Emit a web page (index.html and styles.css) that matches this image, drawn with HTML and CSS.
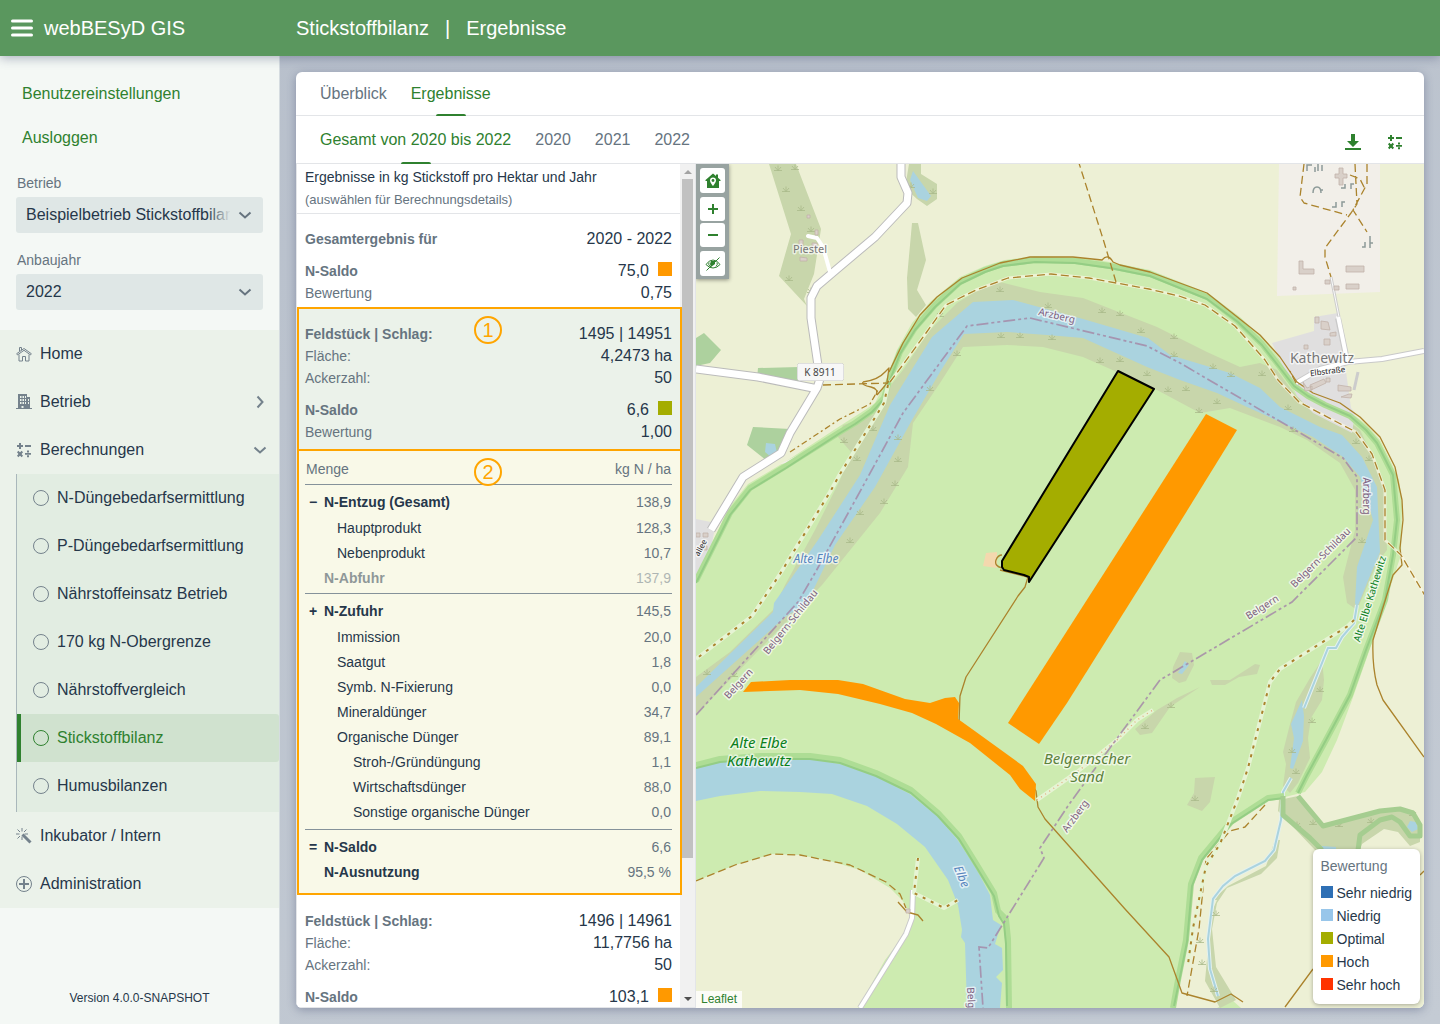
FILE: index.html
```html
<!DOCTYPE html>
<html lang="de">
<head>
<meta charset="utf-8">
<meta name="viewport" content="width=device-width, initial-scale=1">
<title>webBESyD GIS – Stickstoffbilanz</title>
<link rel="stylesheet" href="styles.css">
</head>
<body>
<svg class="sprite" aria-hidden="true">
  <symbol id="i-calc" viewBox="0 0 16 16"><path d="M3 1h2v2h2v2H5v2H3V5H1V3h2zM9 3h6v2H9zM11 8.500h2v2h-2zM9 11h6v1.700H9zM11 13.300h2v2h-2z"/><path d="M1.700 9.500l4.600 5M6.300 9.500l-4.600 5" fill="none" stroke="currentColor" stroke-width="2"/><path d="M2.500 10.500h3v3h-3z"/></symbol>
  <symbol id="i-circle" viewBox="0 0 16 16"><circle cx="8" cy="8" r="7.500" fill="none" stroke="currentColor"/></symbol>
  <symbol id="i-down" viewBox="0 0 16 16"><path d="M2.500 5.500l5.500 5 5.500-5" fill="none" stroke="currentColor" stroke-width="2"/></symbol>
  <symbol id="i-right" viewBox="0 0 16 16"><path d="M5.500 2.500l5 5.500-5 5.500" fill="none" stroke="currentColor" stroke-width="2"/></symbol>
</svg>

<header class="topbar">
  <div class="brand">
    <button class="menu-button" type="button" aria-label="Menü"><svg viewBox="0 0 22 18"><path d="M1.500 2h19M1.500 9h19M1.500 16h19" stroke="#fff" stroke-width="3" stroke-linecap="round"/></svg></button>
    <span>webBESyD GIS</span>
  </div>
  <div class="page-title"><span>Stickstoffbilanz</span><span>|</span><span>Ergebnisse</span></div>
</header>

<div class="shell">
  <aside class="sidebar">
    <div class="account">
      <a href="#einstellungen">Benutzereinstellungen</a>
      <a href="#logout">Ausloggen</a>
    </div>
    <div class="field">
      <label for="betrieb">Betrieb</label>
      <div class="select fade"><select id="betrieb"><option>Beispielbetrieb Stickstoffbilanz</option></select><svg><use href="#i-down"/></svg></div>
    </div>
    <div class="field">
      <label for="jahr">Anbaujahr</label>
      <div class="select"><select id="jahr"><option>2022</option><option>2021</option><option>2020</option></select><svg><use href="#i-down"/></svg></div>
    </div>
    <nav class="nav">
      <a class="item" href="#home"><svg viewBox="0 0 16 16" fill="none" stroke="currentColor"><path d="M.7 7.700L8 2.500l7.300 5.200-.8 1.200L8 4.300 1.500 8.900zM3 8.500v6.500h3.500v-4.500h3V15H13V8.500M3.500 5V1.500h2V4"/></svg>Home</a>
      <a class="item" href="#betrieb-menu"><svg viewBox="0 0 16 16"><path fill-rule="evenodd" d="M2 0h9v3h3v11h2v1H0v-1h2zM4 2v2h1.500V2zM6.500 2v2H8V2zM9 2v2h1V2zM4 5v2h1.500V5zM6.500 5v2H8V5zM9 5v2h1V5zM4 8v2h1.500V8zM6.500 8v2H8V8zM9 8v2h1V8zM5.500 12v2h2v-2zM12 5v2h1V5zM12 8v2h1V8z"/></svg>Betrieb<svg class="caret"><use href="#i-right"/></svg></a>
      <a class="item" href="#berechnungen"><svg><use href="#i-calc"/></svg>Berechnungen<svg class="caret"><use href="#i-down"/></svg></a>
      <div class="submenu">
        <a href="#n"><svg><use href="#i-circle"/></svg>N-Düngebedarfsermittlung</a>
        <a href="#p"><svg><use href="#i-circle"/></svg>P-Düngebedarfsermittlung</a>
        <a href="#ne"><svg><use href="#i-circle"/></svg>Nährstoffeinsatz Betrieb</a>
        <a href="#170"><svg><use href="#i-circle"/></svg>170 kg N-Obergrenze</a>
        <a href="#nv"><svg><use href="#i-circle"/></svg>Nährstoffvergleich</a>
        <a class="active" href="#sb" aria-current="page"><svg><use href="#i-circle"/></svg>Stickstoffbilanz</a>
        <a href="#hb"><svg><use href="#i-circle"/></svg>Humusbilanzen</a>
      </div>
      <a class="item" href="#inkubator"><svg viewBox="0 0 16 16" fill="none" stroke="currentColor"><path d="M6.500 6.500l8 8" stroke-width="3"/><path d="M6 0v3.500M0 6h3.500M1.500 1.500L4 4M10.500 1.500L8 4M1.500 10.500L4 8M6 8.500V12M8.500 6H12"/></svg>Inkubator / Intern</a>
      <a class="item" href="#admin"><svg viewBox="0 0 16 16" fill="none" stroke="currentColor"><circle cx="8" cy="8" r="7.500"/><path d="M8 3v10M3 8h10" stroke-width="2"/></svg>Administration</a>
    </nav>
    <div class="version">Version 4.0.0-SNAPSHOT</div>
  </aside>

  <main class="content">
    <section class="card">
      <nav class="tabs main-tabs">
        <a href="#ueberblick">Überblick</a>
        <a class="active" href="#ergebnisse">Ergebnisse</a>
      </nav>
      <nav class="tabs year-tabs">
        <a class="active" href="#gesamt">Gesamt von 2020 bis 2022</a>
        <a href="#2020">2020</a>
        <a href="#2021">2021</a>
        <a href="#2022">2022</a>
        <div class="tools">
          <button type="button" aria-label="Herunterladen"><svg viewBox="0 0 16 16"><path d="M6 0h4v7h4L8 13 2 7h4zM0 14h16v2H0z"/></svg></button>
          <button type="button" aria-label="Berechnen"><svg><use href="#i-calc"/></svg></button>
        </div>
      </nav>

      <div class="split">
        <div class="results">
          <div class="result-list">
            <div class="intro"><h2>Ergebnisse in kg Stickstoff pro Hektar und Jahr</h2><p>(auswählen für Berechnungsdetails)</p></div>
            <dl class="block">
              <div><dt><b>Gesamtergebnis für</b></dt><dd>2020 - 2022</dd></div>
              <div class="gap"><dt><b>N-Saldo</b></dt><dd>75,0<i class="chip hoch"></i></dd></div>
              <div><dt>Bewertung</dt><dd>0,75</dd></div>
            </dl>
            <div class="marked">
              <dl class="block">
                <div><dt><b>Feldstück | Schlag:</b></dt><dd>1495 | 14951</dd></div>
                <div><dt>Fläche:</dt><dd>4,2473 ha</dd></div>
                <div><dt>Ackerzahl:</dt><dd>50</dd></div>
                <div class="gap"><dt><b>N-Saldo</b></dt><dd>6,6<i class="chip optimal"></i></dd></div>
                <div><dt>Bewertung</dt><dd>1,00</dd></div>
              </dl>
              <span class="number">1</span>
            </div>
            <div class="marked detail">
              <table>
                <thead><tr><th scope="col" colspan="2">Menge</th><th scope="col">kg N / ha</th></tr></thead>
                <tbody>
                  <tr class="sum"><td>−</td><th scope="row">N-Entzug (Gesamt)</th><td>138,9</td></tr>
                  <tr class="l1"><td></td><th scope="row">Hauptprodukt</th><td>128,3</td></tr>
                  <tr class="l1"><td></td><th scope="row">Nebenprodukt</th><td>10,7</td></tr>
                  <tr class="sum muted"><td></td><th scope="row">N-Abfuhr</th><td>137,9</td></tr>
                </tbody>
                <tbody class="supply">
                  <tr class="sum"><td>+</td><th scope="row">N-Zufuhr</th><td>145,5</td></tr>
                  <tr class="l1"><td></td><th scope="row">Immission</th><td>20,0</td></tr>
                  <tr class="l1"><td></td><th scope="row">Saatgut</th><td>1,8</td></tr>
                  <tr class="l1"><td></td><th scope="row">Symb. N-Fixierung</th><td>0,0</td></tr>
                  <tr class="l1"><td></td><th scope="row">Mineraldünger</th><td>34,7</td></tr>
                  <tr class="l1"><td></td><th scope="row">Organische Dünger</th><td>89,1</td></tr>
                  <tr class="l2"><td></td><th scope="row">Stroh-/Gründüngung</th><td>1,1</td></tr>
                  <tr class="l2"><td></td><th scope="row">Wirtschaftsdünger</th><td>88,0</td></tr>
                  <tr class="l2"><td></td><th scope="row">Sonstige organische Dünger</th><td>0,0</td></tr>
                </tbody>
                <tbody>
                  <tr class="sum"><td>=</td><th scope="row">N-Saldo</th><td>6,6</td></tr>
                  <tr class="sum"><td></td><th scope="row">N-Ausnutzung</th><td>95,5 %</td></tr>
                </tbody>
              </table>
              <span class="number">2</span>
            </div>
            <dl class="block">
              <div><dt><b>Feldstück | Schlag:</b></dt><dd>1496 | 14961</dd></div>
              <div><dt>Fläche:</dt><dd>11,7756 ha</dd></div>
              <div><dt>Ackerzahl:</dt><dd>50</dd></div>
              <div class="gap"><dt><b>N-Saldo</b></dt><dd>103,1<i class="chip hoch"></i></dd></div>
            </dl>
          </div>
          <div class="scrollbar" aria-hidden="true"><i class="up"></i><i class="thumb"></i><i class="down"></i></div>
        </div>

        <div class="map">
          <svg class="map-canvas" viewBox="696 164 728 844" preserveAspectRatio="xMinYMin slice" role="img" aria-label="Karte der Schläge bei Kathewitz">
            <defs>
              <g id="grass"><path d="M-4 2.500h8M0 2.500v-5M0 2.500l-3-3.500M0 2.500l3-3.500" fill="none" stroke="#a9ba8a" stroke-width=".8"/></g>
            </defs>
            <rect x="0" y="0" width="3000" height="3000" fill="#edf0d5"/>
            <!-- meadow -->
            <path fill="#cdebb0" d="M696 585L712 546 727 510 748 484 785 462 840 426 865 410 875 403 884 385 897 350 912 323 930 302 960 277 985 266 1005 260 1035 256 1075 257 1110 262 1150 270 1208 293 1240 317 1265 340 1282 362 1296 382 1325 401 1350 412 1367 425 1380 440 1390 460 1399 480 1402 505 1401 555 1386 600 1373 640 1352 700 1337 740 1322 772 1305 792 1285 797 1272 796 1242 815 1217 840 1198 864 1192 885 1187 935 1180 980 1175 1008H858L885 960 908 930 911 914 902 900 890 888 860 870 830 861 800 855 772 854 735 865 696 881z"/>
            <path fill="#cdebb0" d="M1217 1008l15-8 9 8z"/>
            <!-- rough grassland -->
            <g fill="#c8d6ab">
              <path d="M696 677L730 652 773 610 785 585 815 530 840 480 851 452 838 437 843 425 873 415 887 390 903 370 930 330 957 303 990 283 1000 282 1040 292 1083 298 1157 327 1207 352 1240 367 1260 363 1277 370 1297 397 1337 412 1360 430 1373 457 1385 487 1387 550 1377 563 1357 610 1347 603 1343 577 1355 530 1355 490 1340 463 1307 440 1280 427 1230 408 1200 413 1157 390 1117 372 1083 357 1043 347 1007 345 963 347 940 383 913 423 908 467 880 513 822 585 696 715z"/>
              <path d="M769 164h27l25 65-7 45-10 25 3 7-28-30 12-42z"/>
              <path d="M921 164v10l16 10v15l-10 7-10-7-12-11 4-24zM918 223l8 37-9 30 9 15-10 12-8-8-1-31 5-55z"/>
              <path d="M1180 652l12 1 2 12-8 16-7 2-7-5 1-11zM1200 687l-30 20-18 26-12 2-5-6 22-19 20-12zM1210 680h20l25-16 5 1-3 9-18 3-14 8h-13zM1322 660l2 20-2 20-11 18-3 20 2 20-12 25-8 10-7-7 3-22-3-12 6-24 7-26 14-24z"/>
              <path d="M1195 778l20-1-5 25-8 9-15-6 7-12zM1208 948l4-37 5-11h-5l16-14 38-20 9-26h5l-3 18-16 16-34 14-10 15-5 26 4 38 20 33-16 8-15-27z"/>
              <path d="M1279 800l19-4 24 31 58-16 25-2 15 13v20l-10 4-12-14-14-3-22 15-2 6h-45l-37-39z"/>
            </g>
            <path fill="#add19e" d="M696 338l8-5 17 17-11 13-14 3zM758 368l41-1v18l-42-6zM753 427l37 2-15 27-8 5-20-16z"/>
            <path fill="#e0dfdf" d="M1272 343l42-12v-14l24-4 13 95 4 5-3 20-39-20-16-17zM696 519l20 4-4 20-16 35z"/>
            <path fill="#f2efe9" d="M1279 164h101v128l-103 4zM780 464l45-22-30 20z"/>
            <path fill="#f4d8ae" d="M986 553l11-1v16l-14-2z"/>
            <!-- water -->
            <g fill="#aad3df">
              <path d="M696 687L773 612 774 603 818 540 860 475 890 405 932 337 973 302 1013 300 1083 319 1148 338 1170 355 1230 373 1260 388 1280 407 1320 427 1342 435 1362 457 1377 487 1380 552 1367 583 1357 608 1355 603 1357 567 1373 520 1360 477 1343 457 1313 437 1247 407 1217 393 1180 380 1147 367 1083 338 1047 335 1007 332 964 334 940 372 912 420 875 487 835 545 807 603 785 617 696 697z"/>
              <path d="M696 768L720 762 760 759 810 759 840 764 875 776 910 794 937 816 957 839 975 866 990 895 993 920 1001 925 995 944 1002 948 1003 970 996 977 1002 983 1000 1008H967L965 943 961 937 962 930 958 905 948 880 925 847 897 824 867 806 832 794 800 792 760 791 720 796 696 801z"/>
              <path d="M913 171l18 25-4 5-9-3-8-18zM766 443l9 1 2 9-6 4-6-5zM1185 661l4 4-7 9-4-1zM1302 700l2 16-1 25-10 28-3-1 4-30-3-14zM1410 821l6 1 2 7-6 3-5-5zM1322 846l14 1v4h-16z"/>
              <path d="M1357 605l-3 18-12 14-6 11h-8l-24 60M1291 778l-8 14-2 28-7 30-9 11-30 15-12 10-10 13-5 40 2 30 8 27" fill="none" stroke="#e4f1ef" stroke-width="4"/>
              <path d="M1357 605l-3 18-12 14-6 11h-8l-24 60M1291 778l-8 14-2 28-7 30-9 11-30 15-12 10-10 13-5 40 2 30 8 27" fill="none" stroke="#aad3df" stroke-width="2"/>
            </g>
            <!-- grass tufts -->
            <use href="#grass" x="778" y="168"/><use href="#grass" x="795" y="167"/><use href="#grass" x="786" y="189"/><use href="#grass" x="801" y="208"/><use href="#grass" x="811" y="229"/><use href="#grass" x="789" y="278"/><use href="#grass" x="811" y="290"/><use href="#grass" x="911" y="185"/><use href="#grass" x="933" y="191"/>
            <use href="#grass" x="1000" y="289"/><use href="#grass" x="1048" y="305"/><use href="#grass" x="1102" y="310"/><use href="#grass" x="1120" y="313"/><use href="#grass" x="1141" y="330"/><use href="#grass" x="1174" y="336"/><use href="#grass" x="1174" y="354"/><use href="#grass" x="1213" y="366"/><use href="#grass" x="1231" y="374"/><use href="#grass" x="1001" y="335"/><use href="#grass" x="1020" y="335"/><use href="#grass" x="1052" y="337"/><use href="#grass" x="957" y="353"/><use href="#grass" x="1100" y="360"/><use href="#grass" x="1120" y="359"/><use href="#grass" x="1147" y="373"/><use href="#grass" x="1168" y="389"/><use href="#grass" x="1186" y="388"/><use href="#grass" x="1217" y="401"/><use href="#grass" x="1199" y="410"/><use href="#grass" x="1262" y="373"/><use href="#grass" x="1288" y="407"/><use href="#grass" x="1293" y="429"/><use href="#grass" x="1356" y="441"/><use href="#grass" x="1369" y="458"/><use href="#grass" x="1362" y="540"/>
            <use href="#grass" x="844" y="440"/><use href="#grass" x="873" y="428"/><use href="#grass" x="857" y="458"/><use href="#grass" x="898" y="437"/><use href="#grass" x="898" y="459"/><use href="#grass" x="895" y="483"/><use href="#grass" x="884" y="501"/><use href="#grass" x="860" y="512"/><use href="#grass" x="850" y="540"/><use href="#grass" x="930" y="388"/><use href="#grass" x="940" y="314"/><use href="#grass" x="707" y="672"/><use href="#grass" x="734" y="674"/><use href="#grass" x="1171" y="705"/><use href="#grass" x="1145" y="726"/><use href="#grass" x="1320" y="689"/><use href="#grass" x="1312" y="720"/><use href="#grass" x="1292" y="750"/><use href="#grass" x="1296" y="771"/><use href="#grass" x="1195" y="798"/><use href="#grass" x="1297" y="824"/><use href="#grass" x="1313" y="822"/><use href="#grass" x="1339" y="824"/><use href="#grass" x="1371" y="820"/><use href="#grass" x="1413" y="813"/><use href="#grass" x="1216" y="913"/><use href="#grass" x="1200" y="940"/><use href="#grass" x="1202" y="962"/><use href="#grass" x="1214" y="989"/>
            <!-- levees -->
            <g fill="none" stroke-linejoin="round">
              <g stroke="#aedd95" stroke-width="6">
                <path d="M696 581L714 545 730 513 750 488 786 466 840 432 855 423 872 411 884 398 890 378 900 352 915 328 935 305 960 282 985 270 1003 264 1035 260 1075 261 1110 266 1150 274 1207 297 1238 321 1262 344 1280 367 1294 386 1308 396 1325 405 1350 416 1366 430 1377 443 1393 475 1397 520 1393 555 1385 600 1366 650 1350 695 1326 740 1307 775 1298 793"/>
                <path d="M1284 796l-16 2-37 24-30 36-10 26-5 56-8 40-5 28M696 765l24-6 40-3h50l30 4 36 13 35 17 27 23 21 23 18 29 17 28 4 18 8 8 2 20 1 69"/>
              </g>
              <g stroke="#94cd84" stroke-width="2">
                <path d="M696 583L714 547 730 515 750 490 786 468 840 433 855 424 872 412 884 399 890 380 900 354 915 330 935 307 960 284 985 272 1003 266 1035 262 1075 263 1110 268 1150 276 1207 299 1238 322 1262 345 1280 368 1294 386 1308 396 1325 405 1350 416 1366 430 1377 443 1393 475 1397 520 1393 555 1385 600 1366 650 1350 695 1326 740 1307 775 1298 793"/>
                <path d="M1284 798l-16 2-37 24-29 36-10 26-5 56-8 40-5 24M696 768l24-6 40-3h50l30 4 36 13 35 17 27 23 21 23 18 29 17 28 5 20 5 8 2 20 1 62"/>
              </g>
              <path stroke="#a5cd90" stroke-width="5" d="M1283 796v19L1310 838 1322 850M1298 796L1323 826 1380 811 1400 809 1413 813 1420 825V836H1410L1400 822 1392 817 1380 820 1360 835 1358 850"/>
            </g>
            <!-- roads -->
            <g fill="none" stroke-linejoin="round">
              <path stroke="#bbb" stroke-width="9" d="M901 160v17l7 16-1 10-32 34-38 32-20 17-6 12v20l9 61-3 9-27 45-9 20-38 24-32 53M696 369l62 8 60 12"/>
              <path stroke="#fff" stroke-width="4" stroke-linecap="round" d="M808 236l9 2 6 9 7 25"/>
              <path stroke="#fff" stroke-width="7" d="M901 160v17l7 16-1 10-32 34-38 32-20 17-6 12v20l9 61-3 9-27 45-9 20-38 24-32 53M696 369l62 8 60 12"/>
              <path stroke="#c9c9c9" stroke-width="6" d="M1296 383l24-14 28-7 34-3 42-8M1338 318l9 42M913 890l-1 28-6 16-46 74"/>
              <path stroke="#fff" stroke-width="4" d="M1296 383l24-14 28-7 34-3 42-8M1338 316l9 44M913 890l-1 28-6 16-46 74"/>
              <path stroke="#ccc" stroke-width="3" d="M1331 277l8 40M1358 372l-4 18"/><path stroke="#fafafa" d="M1331 277l8 40"/>
            </g>
            <!-- tracks -->
            <g fill="none" stroke="#ab832c" stroke-width="1.300" stroke-linejoin="round">
              <path d="M889 372L903 343 920 315 937 297 962 278 990 267 1000 263 1030 257 1073 257 1102 260Q1108 253 1113 262L1120 265 1150 272 1207 293 1260 335 1280 357 1297 382 1313 393 1340 403 1360 417 1380 437 1395 467 1402 500 1403 520 1400 548 1402 565 1393 575 1373 640Q1372 665 1377 685L1383 700 1424 757"/>
              <path d="M1002 568q-8-2-6-8 2-5 6-5M1000 570l28 7-3 10-7 9-43 67-9 14-6 19-1 27 12 12 55 39 10 17 2 16 7 12 80 90 44 48 8 22 5 14 33 9 16-8 12 8M1285 1007l28-38M1400 1005M1420 875l4-4"/>
              <path d="M863 382q15-2 22-10l4-4-2 14M863 382q-2 3 8 5 8 2 5 8M877 395l12-14M898 902l9 10 11 3 5 6"/>
              <g stroke="#fbf6e4" stroke-width="3" stroke-opacity=".7"><path d="M890 382l12-16 24-33 20-28 30-15 32-12 43-4 38 4 60 11 30 7 26 9 30 21 30 34 13 20 21 22 32 17 25 13 16 22 13 36v50l16 15 26 44"/></g>
              <g stroke-dasharray="8 4"><path d="M890 382l12-16 24-33 20-28 30-15 32-12 43-4 38 4 60 11 30 7 26 9 30 21 30 34 13 20 21 22 32 17 25 13 16 22 13 36v50l16 15 26 44"/>
                <path d="M1078 160l26 82 12 40M696 881l39-16 37-11 28 1 50 10 36 17 14 12 6 14M823 385l65-2M1304 164l-4 33 4 6 43 12M1355 164l2 40-6 9-26 35v9l6 20M1367 164v20l-14 26 14 22M1350 175l10 4 5 10M1265 805l-20 22-15 4-24 28-1 10-6 60-12 67M1296 383l-6-12"/></g>
              <g stroke="#e6f4d4" stroke-width="4"><path d="M888 385l-4 18-44 71-10 18-50 82-28 42-56 43M1354 620l-6 6-68 43-10 13-22 86-10 30-18 46-14 22-13 62-5 36M918 858l-4 35 30 15 14-8M1037 800l40-28 40-32 20-20 16-10"/></g>
              <g stroke-width="2" stroke-dasharray="3 6"><path d="M888 385l-4 18-44 71-10 18-50 82-28 42-56 43M1354 620l-6 6-68 43-10 13-22 86-10 30-18 46-14 22-13 62-5 36M918 858l-4 35 30 15 14-8"/></g>
              <path stroke-dasharray="6 3 2 3" d="M790 452l50-33 30-15 8-14"/>
              <path stroke="#e2a87c" stroke-dasharray="1 4" d="M1037 800l40-28 40-32 20-20 16-10"/>
            </g>
            <!-- administrative borders -->
            <g fill="none" stroke="#a58aa8" stroke-width="1.700" stroke-dasharray="12 3 3 3 3 3" opacity=".85">
              <path d="M696 715L733 674 798 602 815 573 857 497 903 413 967 326 1030 318 1147 346 1180 363 1343 458 1357 477V537L1292 602 1160 680 1107 752 1070 803 1040 848 1044 858 988 948 979 947 983 1008"/>
            </g>
            <!-- buildings -->
            <g fill="#d9d0c9" stroke="#c2b3aa" stroke-width=".8">
              <path d="M1299 261h4v8h11v5h-15zM1346 266h18v6h-18zM1346 284h13v5h-13zM1325 280h5v4h-5zM1334 286h5v4h-5zM1293 287h3v3h-3zM1339 168h4v6h4v4h-4v7h-4v-7h-4v-4h4zM1315 317h4v6h-4zM1321 321l7 1 2 8-9-1zM1330 333l6-1v4h-6zM1324 339h6v6h-6zM1304 345h4v4h-4zM1310 385l14-6 2 4-15 7zM1338 385l13 2v4h-13zM1341 397l10 1 1-4h-3zM1326 378h4v4h-4zM1303 382l4 6 5-2v4l-7 1zM799 240h4v6h-4zM815 230h3v5h-3zM807 215h3v3h-3zM800 257l7 1v3h-7zM812 243h5v5h-5zM696 533h4v4h-4zM703 533h5v4h-5zM702 545l5 1v4h-5zM906 909h4v4h-4z"/>
            </g>
            <g fill="none" stroke="#8d9a98" stroke-width="1.500"><path d="M1307 171v-6h5M1318 164v7M1322 165v6M1315 172v-5M1313 193q0-6 4-6t4 6M1320 190h3M1345 184v4h-4M1351 189v-5h3M1336 202v5h-4M1342 207v-5h3M1365 242v5h-3M1370 236v12M1370 243h3"/></g>
            <!-- fields -->
            <g fill="#ff9900">
              <path d="M1206 414L1237 430 1143 582 1067 703 1039 744 1008 723z"/>
              <path d="M743 692L751 682 790 680 838 680 863 684 905 699 930 703 945 698 955 697 959 703 958 719 972 729 1023 766 1036 784 1035 801 1020 789 1010 775 970 743 936 724 912 713 880 704 838 694 800 690z"/>
            </g>
            <path fill="#a4ad00" stroke="#000" stroke-width="2" stroke-linejoin="round" d="M1118 371L1154 389 1029 582V577L1024 575 1004 570 1002 567V561z"/>
            <!-- labels -->
            <g class="map-text">
              <rect x="797.500" y="363.500" width="46" height="17" rx="2" fill="#f7f7f7" stroke="#c4c4c4"/>
              <text class="shield" x="820" y="376">K 8911</text>
              <text class="village small" x="810" y="253">Piestel</text>
              <text class="village" x="1322" y="363">Kathewitz</text>
              <text class="street" transform="translate(1328 374) rotate(-7)">Elbstraße</text>
              <text class="street" transform="translate(703 549) rotate(-62)">allee</text>
              <text class="border" transform="translate(1056 319) rotate(13)">Arzberg</text>
              <text class="border" transform="translate(1363 496) rotate(90)">Arzberg</text>
              <text class="border" transform="translate(1323 560) rotate(-45)">Belgern-Schildau</text>
              <text class="border" transform="translate(1264 610) rotate(-32)">Belgern</text>
              <text class="border" transform="translate(793 624) rotate(-51)">Belgern-Schildau</text>
              <text class="border" transform="translate(741 686) rotate(-47)">Belgern</text>
              <text class="border" transform="translate(1078 818) rotate(-54)">Arzberg</text>
              <text class="border" transform="translate(968 1006) rotate(87)">Belgern</text>
              <text class="river" x="816" y="563">Alte Elbe</text>
              <text class="river" transform="translate(958 878) rotate(68)">Elbe</text>
              <text class="reserve" x="759" y="748">Alte Elbe</text>
              <text class="reserve" x="759" y="766">Kathewitz</text>
              <text class="reserve upright" transform="translate(1373 600) rotate(-73)">Alte Elbe Kathewitz</text>
              <text class="place" x="1087" y="764">Belgernscher</text>
              <text class="place" x="1087" y="782">Sand</text>
            </g>
          </svg>
          <div class="map-controls">
            <button type="button" aria-label="Zum Betrieb"><svg viewBox="0 0 16 16"><path fill-rule="evenodd" d="M8 .5l3 2.500V1.500h2v3.300L15.500 7v1H14v7H2V8H.5V7zM8 4.500a3 3 0 0 0-3 3c0 2 3 5.500 3 5.500s3-3.500 3-5.500a3 3 0 0 0-3-3z"/><circle cx="8" cy="7.500" r="1.400"/></svg></button>
            <button class="zoom-in" type="button" aria-label="Vergrößern"><svg viewBox="0 0 16 16"><path d="M8 3v10M3 8h10" fill="none" stroke="currentColor" stroke-width="2"/></svg></button>
            <button class="zoom-out" type="button" aria-label="Verkleinern"><svg viewBox="0 0 16 16"><path d="M3 8h10" fill="none" stroke="currentColor" stroke-width="2"/></svg></button>
            <button type="button" aria-label="Ebenen ausblenden"><svg viewBox="0 0 16 16" fill="none" stroke="currentColor"><path d="M1 8.500Q4 4 8 4t7 4.500Q12 12 8 12T1 8.500zM14.500 1.500l-13 13"/><path d="M6 5h4v3l-4 3-1-3z" fill="currentColor" stroke="none"/><path d="M4 6.500q-1 2 1 4M12 6.500q1 2-1 4"/></svg></button>
          </div>
          <div class="legend">
            <h3>Bewertung</h3>
            <ul>
              <li><i class="sehr-niedrig"></i>Sehr niedrig</li>
              <li><i class="niedrig"></i>Niedrig</li>
              <li><i class="optimal"></i>Optimal</li>
              <li><i class="hoch"></i>Hoch</li>
              <li><i class="sehr-hoch"></i>Sehr hoch</li>
            </ul>
          </div>
          <a class="attribution" href="#leaflet">Leaflet</a>
        </div>
      </div>
    </section>
  </main>
</div>
</body>
</html>
```
FILE: styles.css
```css
:root {
  --green: #2f812f;
  --text: #26374a;
  --muted: #66747f;
  --line: #e3e5e8;
  --mark: #ffa500;
}

* { box-sizing: border-box; }

body {
  margin: 0;
  height: 100vh;
  display: flex;
  flex-direction: column;
  font: 16px/22px "Liberation Sans", Arial, sans-serif;
  color: var(--text);
  background: linear-gradient(160deg, #b7bfcb, #c4cbd4);
}

a { color: inherit; text-decoration: none; }
button { border: 0; padding: 0; background: none; color: var(--green); display: flex; }
svg:not([fill]) { fill: currentColor; }
h2, h3, p, dl, dd, ul { margin: 0; padding: 0; }
.sprite { display: none; }

.topbar {
  flex: none;
  height: 56px;
  display: flex;
  align-items: center;
  background: #5a975e;
  color: #fff;
  font-size: 20px;
  box-shadow: 0 2px 10px rgba(60, 70, 110, .4);
  z-index: 2;
}
.brand { width: 296px; padding-left: 11px; display: flex; align-items: center; gap: 11px; }
.menu-button svg { width: 22px; height: 18px; }
.page-title { display: flex; gap: 16px; }

.shell { flex: 1; min-height: 0; display: flex; }

/* sidebar */
.sidebar {
  flex: none;
  width: 280px;
  display: flex;
  flex-direction: column;
  background: #f4f8f5;
  border-right: 1px solid #d5dce0;
}
.account { padding: 16px 22px 0; color: var(--green); }
.account a { display: block; line-height: 44px; }
.field { padding: 14px 16px 0; }
.account + .field { padding-top: 12px; }
.field label { display: block; font-size: 14px; line-height: 22px; color: var(--muted); padding-left: 1px; margin-bottom: 3px; }
.field + .field { padding-top: 16px; }
.select { position: relative; width: 247px; height: 36px; background: #dfe7e6; border-radius: 3px; }
.select select {
  width: 100%;
  height: 100%;
  padding: 0 33px 0 10px;
  border: 0;
  background: none;
  appearance: none;
  font: inherit;
  color: inherit;
}
.select svg { position: absolute; right: 10px; top: 10px; width: 16px; height: 16px; color: var(--muted); pointer-events: none; }
.fade::after { content: ""; position: absolute; top: 4px; bottom: 4px; right: 32px; width: 24px; background: linear-gradient(90deg, rgba(223, 231, 230, 0), #dfe7e6); pointer-events: none; }

.nav { margin-top: 20px; background: #ebf2ea; }
.nav a { display: flex; align-items: center; gap: 8px; height: 48px; padding: 0 11px 0 16px; }
.nav svg { width: 16px; height: 16px; color: #74828c; }
.nav .caret { margin-left: auto; }
.submenu { margin-left: 16px; padding-bottom: 2px; border-left: 1px solid #a9b7bb; background: #e2ede2; }
.nav .submenu .active { background: #d0e2cf; color: var(--green); border-left: 4px solid var(--green); padding-left: 12px; border-radius: 0 3px 3px 0; }
.nav .active svg { color: var(--green); }
.version { margin-top: auto; padding-bottom: 15px; text-align: center; font-size: 12px; }

/* card and tabs */
.content { flex: 1; min-width: 0; padding: 16px; display: flex; }
.card {
  flex: 1;
  min-width: 0;
  display: flex;
  flex-direction: column;
  background: #fff;
  border-radius: 6px;
  overflow: hidden;
  box-shadow: 0 2px 10px rgba(60, 70, 110, .4);
}
.tabs { flex: none; display: flex; gap: 24px; padding: 0 21px 0 24px; border-bottom: 1px solid var(--line); color: var(--muted); }
.tabs > a { position: relative; line-height: 43px; }
.year-tabs > a { line-height: 47px; }
.tabs .active { color: var(--green); }
.tabs .active::after { content: ""; position: absolute; left: calc(50% - 15px); bottom: -1px; width: 30px; height: 2px; border-radius: 2px 2px 0 0; background: var(--green); }
.tools { margin-left: auto; display: flex; align-items: center; gap: 26px; padding-top: 5px; }
.tools svg { width: 16px; height: 16px; }

.split { flex: 1; min-height: 0; display: flex; }

/* results */
.results { flex: none; width: 400px; display: flex; border: 1px solid var(--line); border-top: 0; }
.result-list { position: relative; z-index: 1; width: 383px; overflow-x: visible; overflow-y: clip; }
.intro { height: 50px; padding: 2px 8px 0; border-bottom: 1px solid var(--line); }
.intro h2 { font-size: 14px; font-weight: 400; line-height: 22px; }
.intro p { font-size: 13px; line-height: 24px; color: var(--muted); }
.block { padding: 14px 8px 4px; }
.marked .block, .marked + .block { padding-top: 15px; }
.block > div { display: flex; justify-content: space-between; height: 22px; }
.block .gap { margin-top: 10px; }
.block dt { font-size: 14px; line-height: 22px; color: var(--muted); }
.chip { display: inline-block; width: 14px; height: 14px; margin-left: 9px; }
.hoch { background: #ff9900; }
.optimal { background: #a4ad00; }

.marked { position: relative; height: 142px; background: #ebf2ea; }
.marked::after { content: ""; position: absolute; inset: -1px -2px -1px 0; border: 2px solid var(--mark); pointer-events: none; }
.number {
  position: absolute;
  left: 177px;
  top: 8px;
  width: 28px;
  height: 28px;
  border: 2px solid var(--mark);
  border-radius: 50%;
  color: var(--mark);
  font-size: 20px;
  line-height: 25px;
  text-align: center;
}
.detail { height: auto; padding: 0 8px 10px; background: #f9f9e8; font-size: 14px; }
.detail::after { bottom: 0; }
.detail table { width: 100%; border-collapse: separate; border-spacing: 0; line-height: 25px; color: var(--muted); }
.detail th, .detail td { padding: 0 1px 0 0; font-weight: 400; text-align: left; }
.detail thead th { padding: 7px 1px 2px; border-bottom: 1px solid #85929a; }
.detail tr > :last-child { text-align: right; }
.detail tbody th { color: var(--text); }
.detail .sum th, .detail .sum td:first-child { font-weight: 700; color: var(--text); }
.detail tbody td:first-child { width: 19px; padding-left: 4px; }
.detail .l1 th { padding-left: 13px; }
.detail .l2 th { padding-left: 29px; }
.detail .muted { opacity: .5; }
.detail tbody tr:first-child > * { padding-top: 5px; }
.detail tbody:not(:last-child) tr:first-child > * { padding-bottom: 1px; }
.detail tbody tr.muted > * { padding-bottom: 2px; }
.detail .supply tr:last-child > * { padding-bottom: 4px; }
.detail tbody + tbody tr:first-child > * { border-top: 1px solid #85929a; }

.scrollbar { width: 15px; background: #f1f1f1; display: flex; flex-direction: column; align-items: center; padding: 6px 0; }
.scrollbar i { display: block; }
.scrollbar .up { border: 4px solid transparent; border-top: 0; border-bottom-color: #a3a3a3; }
.scrollbar .thumb { flex: 0 1 679px; width: 11px; margin-top: 5px; background: #c1c1c1; }
.scrollbar .down { margin-top: auto; border: 4px solid transparent; border-bottom: 0; border-top-color: #505050; }

/* map */
.map { position: relative; flex: 1; min-width: 0; overflow: hidden; }
.map-canvas { display: block; width: 100%; height: 100%; }
.map-text { font-family: "Noto Sans", sans-serif; text-anchor: middle; paint-order: stroke; stroke: rgba(255, 255, 255, .65); stroke-width: 3px; stroke-linejoin: round; }
.map-text rect { stroke: #c4c4c4; stroke-width: 1px; }
.shield { font-size: 10px; fill: #444; stroke: none; }
.village { font-size: 14px; fill: #777; }
.small { font-size: 11px; }
.street { font-size: 8px; fill: #222; }
.border { font-size: 10px; fill: #7d6080; }
.river { font-size: 12px; font-style: italic; fill: #5684bd; }
.reserve { font-size: 15px; font-style: italic; fill: #0a7f1c; }
.upright { font-style: normal; font-size: 10px; }
.place { font-size: 15px; font-style: italic; fill: #5c823c; }

.map-controls { position: absolute; left: 0; top: 0; width: 33px; padding: 4px 4px 3px; background: #98a3a1; display: flex; flex-direction: column; gap: 4px; box-shadow: 0 1px 4px rgba(0, 0, 0, .4); }
.map-controls button { height: 25px; align-items: center; justify-content: center; background: #fff; border-radius: 3px; }
.map-controls .zoom-in { height: 24px; }
.map-controls .zoom-out { height: 24px; margin-top: -2px; }
.map-controls svg { width: 16px; height: 16px; }

.legend { position: absolute; right: 4px; bottom: 4px; padding: 6px 8px 7px; background: #fff; border-radius: 6px; box-shadow: 0 1px 4px rgba(0, 0, 0, .3); font-size: 14px; }
.legend h3 { font-size: 14px; font-weight: 400; color: var(--muted); margin-bottom: 5px; }
.legend ul { list-style: none; }
.legend li { display: flex; align-items: center; gap: 4px; line-height: 23px; }
.legend i { width: 12px; height: 12px; margin-top: -3px; }
.sehr-niedrig { background: #2f70b5; }
.niedrig { background: #98c6ea; }
.sehr-hoch { background: #ff3300; }
.attribution { position: absolute; left: 0; bottom: 0; padding: 0 5px; background: rgba(255, 255, 255, .8); color: var(--green); font-size: 12px; line-height: 17px; }
```
